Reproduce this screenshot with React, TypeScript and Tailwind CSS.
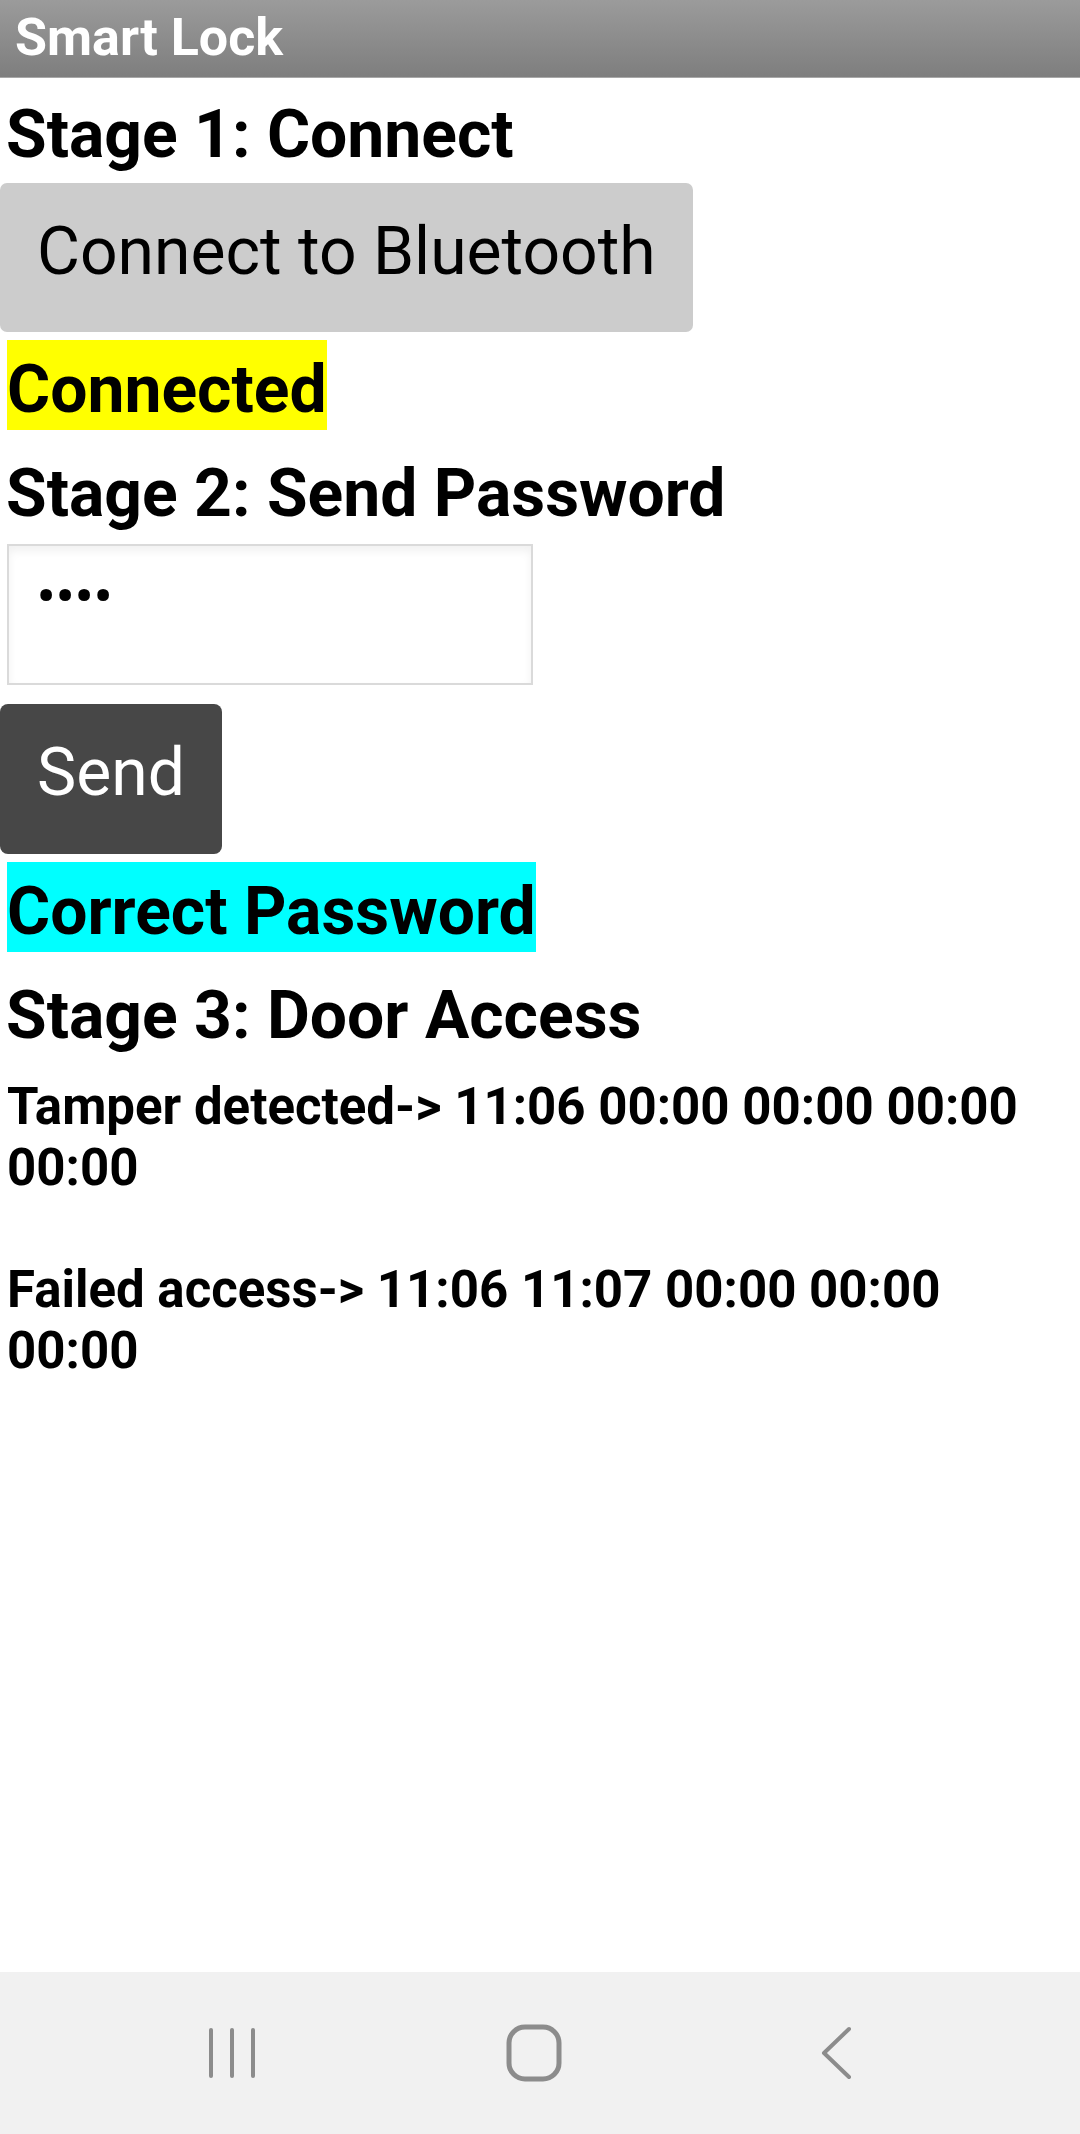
const RecentsIcon = () => (
  <svg width="48" height="52" viewBox="0 0 48 52" fill="none" stroke="#8c8c8c" strokeWidth="4" strokeLinecap="round">
    <line x1="3" y1="3" x2="3" y2="49" />
    <line x1="24" y1="3" x2="24" y2="49" />
    <line x1="45" y1="3" x2="45" y2="49" />
  </svg>
);

const HomeIcon = () => (
  <svg width="56" height="58" viewBox="0 0 56 58" fill="none" stroke="#8c8c8c" strokeWidth="5">
    <rect x="3" y="3" width="50" height="52" rx="16" />
  </svg>
);

const BackIcon = () => (
  <svg width="34" height="54" viewBox="0 0 34 54" fill="none" stroke="#8c8c8c" strokeWidth="4" strokeLinecap="round" strokeLinejoin="round">
    <polyline points="30,3 5,27 30,51" />
  </svg>
);

const Heading = ({ children }: { children: string }) => (
  <h2 className="h-[114px] pl-[6px] pt-[25px] text-[66px] font-bold leading-[77px]">{children}</h2>
);

const Status = ({ children, color }: { children: string; color: string }) => (
  <div className={`ml-[7px] h-[90px] w-fit pt-[9px] text-[66px] font-bold leading-[81px] ${color}`}>{children}</div>
);

export default function App() {
  return (
    <div className="flex h-[2134px] w-[1080px] flex-col bg-white font-['Roboto',sans-serif] text-black">
      <div className="h-[78px] border-b border-[#a8a8a8] bg-gradient-to-b from-[#9b9b9b] to-[#7e7e7e] px-[15px] text-[52px] font-bold leading-[76px] text-white">
        Smart Lock
      </div>

      <main className="flex-1">
        <h2 className="h-[105px] pl-[6px] pt-[18px] text-[66px] font-bold leading-[77px]">Stage 1: Connect</h2>
        <button className="h-[149px] w-fit rounded-[7px] bg-[#cccccc] px-[37px] pb-[13px] text-[66px] leading-[77px]">
          Connect to Bluetooth
        </button>
        <div className="mt-[8px]">
          <Status color="bg-[#ffff00]">Connected</Status>
        </div>

        <Heading>Stage 2: Send Password</Heading>
        <div className="ml-[7px] h-[141px] w-[526px] border-2 border-[#dadada] px-[28px] pt-[20px] text-[50px] font-bold leading-[60px] tracking-[1px] shadow-[inset_0_5px_8px_rgba(0,0,0,0.06)]">
          ••••
        </div>
        <button className="mt-[19px] h-[150px] w-fit rounded-[8px] bg-[#474747] px-[37px] pb-[13px] text-[66px] leading-[77px] text-white">
          Send
        </button>
        <div className="mt-[8px]">
          <Status color="bg-[#00ffff]">Correct Password</Status>
        </div>

        <Heading>Stage 3: Door Access</Heading>
        <p className="mt-[10px] whitespace-pre-line pl-[7px] text-[51px] font-bold leading-[61px]">
          {"Tamper detected-> 11:06 00:00 00:00 00:00 00:00\n\nFailed access-> 11:06 11:07 00:00 00:00 00:00"}
        </p>
      </main>

      <nav className="grid h-[162px] grid-cols-3 items-center bg-[#f1f1f1] pl-[81px] pr-[93px]">
        <div className="flex justify-center">
          <RecentsIcon />
        </div>
        <div className="flex justify-center">
          <HomeIcon />
        </div>
        <div className="flex justify-center">
          <BackIcon />
        </div>
      </nav>
    </div>
  );
}
